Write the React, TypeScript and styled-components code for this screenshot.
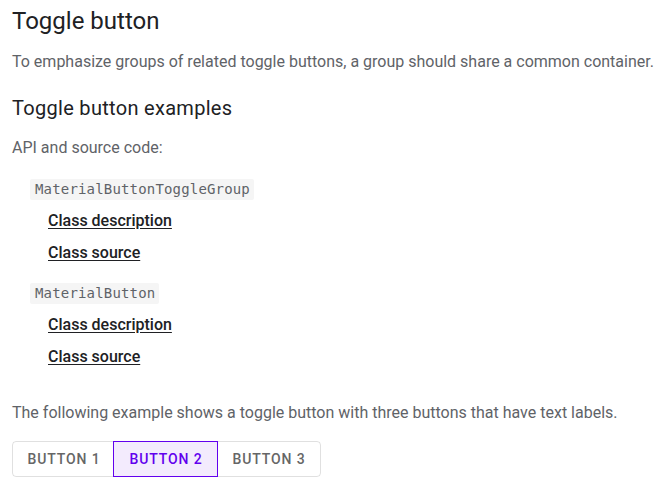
import React from "react";
import styled, { createGlobalStyle } from "styled-components";

const Global = createGlobalStyle`
  html, body { margin: 0; padding: 0; background: #ffffff; }
  body { font-family: Roboto, "Noto Sans", Arial, sans-serif; -webkit-font-smoothing: antialiased; }
`;

const Page = styled.main`
  display: flex;
  flex-direction: column;
  padding: 5px 12px 0 12px;
`;

const Title = styled.h1`
  margin: 0;
  font-size: 24px;
  line-height: 32px;
  font-weight: 400;
  color: #202124;
`;

const Subtitle = styled.h2`
  margin: 20px 0 0 0;
  font-size: 20px;
  line-height: 28px;
  font-weight: 400;
  letter-spacing: 0.3px;
  color: #202124;
`;

const Text = styled.p<{ $top: number }>`
  margin: ${(p) => p.$top}px 0 0 0;
  font-size: 16px;
  line-height: 24px;
  color: #5f6368;
`;

const ApiList = styled.div`
  display: flex;
  flex-direction: column;
  padding-left: 18px;
`;

const ApiEntry = styled.div<{ $top: number }>`
  display: flex;
  flex-direction: column;
  align-items: flex-start;
  gap: 8px;
  margin-top: ${(p) => p.$top}px;
`;

const CodeRow = styled.div`
  height: 24px;
  display: flex;
  align-items: center;
`;

const Code = styled.code`
  display: inline-block;
  font-family: "DejaVu Sans Mono", "Liberation Mono", monospace;
  font-size: 14px;
  letter-spacing: 0.17px;
  line-height: 21px;
  padding: 0 4px 0 5px;
  background: #f5f5f5;
  border-radius: 2px;
  color: #5f6368;
`;

const LinkList = styled.div`
  display: flex;
  flex-direction: column;
  gap: 8px;
  padding-left: 18px;
`;

const Link = styled.a`
  font-size: 16px;
  line-height: 24px;
  font-weight: 500;
  color: #202124;
  text-decoration: underline;
  text-underline-offset: 2px;
  cursor: pointer;
`;

const Group = styled.div`
  margin-top: 16px;
  display: flex;
  align-self: flex-start;
  border: 1px solid rgba(0, 0, 0, 0.12);
  border-radius: 4px;
`;

const ToggleButton = styled.button<{ $selected?: boolean; $w: number }>`
  height: 34px;
  width: ${(p) => p.$w}px;
  margin: 0;
  padding: 0 0 0 1px;
  font-family: Roboto, "Noto Sans", Arial, sans-serif;
  font-size: 14px;
  font-weight: 500;
  letter-spacing: 0.9px;
  text-transform: uppercase;
  background: ${(p) => (p.$selected ? "#f3ebfd" : "transparent")};
  color: ${(p) => (p.$selected ? "#6200ee" : "#666666")};
  border: none;
  outline: ${(p) => (p.$selected ? "1px solid #6200ee" : "none")};
  cursor: pointer;
`;

const apis = [
  { name: "MaterialButtonToggleGroup", top: 17 },
  { name: "MaterialButton", top: 16 },
];

export default function App() {
  return (
    <>
      <Global />
      <Page>
        <Title>Toggle button</Title>
        <Text $top={13}>
          To emphasize groups of related toggle buttons, a group should share a common container.
        </Text>
        <Subtitle>Toggle button examples</Subtitle>
        <Text $top={14}>API and source code:</Text>
        <ApiList>
          {apis.map((a) => (
            <ApiEntry key={a.name} $top={a.top}>
              <CodeRow>
                <Code>{a.name}</Code>
              </CodeRow>
              <LinkList>
                <Link>Class description</Link>
                <Link>Class source</Link>
              </LinkList>
            </ApiEntry>
          ))}
        </ApiList>
        <Text $top={32}>
          The following example shows a toggle button with three buttons that have text labels.
        </Text>
        <Group>
          <ToggleButton $w={101}>Button 1</ToggleButton>
          <ToggleButton $w={103} $selected>
            Button 2
          </ToggleButton>
          <ToggleButton $w={103}>Button 3</ToggleButton>
        </Group>
      </Page>
    </>
  );
}
